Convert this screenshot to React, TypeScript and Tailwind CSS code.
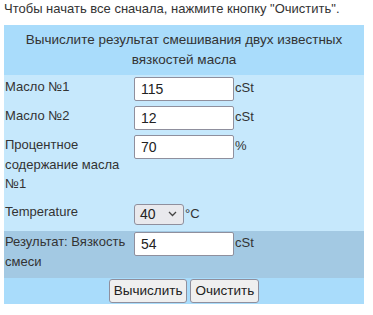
import React from "react";

const inputCls =
  "w-[100px] h-[24px] bg-white border border-[#8f8f9d] rounded-[2px] px-[6px] text-[14px] text-[#222] outline-none";

function Row({
  label,
  children,
  className,
  labelClass,
}: {
  label: React.ReactNode;
  children: React.ReactNode;
  className?: string;
  labelClass?: string;
}) {
  return (
    <div className={"flex items-start " + (className ?? "")}>
      <div className={"w-[130px] shrink-0 pl-[1px] leading-[19.5px] " + (labelClass ?? "")}>{label}</div>
      <div className="flex items-start">{children}</div>
    </div>
  );
}

export default function App() {
  return (
    <div
      className="w-[373px] h-[315px] bg-white text-[#333] text-[13px]"
      style={{ fontFamily: '"Liberation Sans", Arial, sans-serif' }}
    >
      <div className="pl-[4px] pt-[0px] h-[25px] text-[13px] leading-[17px]">
        Чтобы начать все сначала, нажмите кнопку "Очистить".
      </div>
      <div className="ml-[4px] w-[360px]">
        <div className="bg-[#a9dcfb] h-[50px] flex flex-col items-center justify-center text-[13.5px] leading-[20px] text-center">
          <div>Вычислите результат смешивания двух известных</div>
          <div>вязкостей масла</div>
        </div>
        <div className="bg-[#c6e8fc]">
          <Row label="Масло №1" className="h-[29px] pt-[2px]" labelClass="pt-[0px]">
            <input className={inputCls} defaultValue="115" readOnly />
            <span className="leading-[19.5px] pl-[1px] pt-[1px]">cSt</span>
          </Row>
          <Row label="Масло №2" className="h-[29px] pt-[2px]">
            <input className={inputCls} defaultValue="12" readOnly />
            <span className="leading-[19.5px] pl-[1px] pt-[1px]">cSt</span>
          </Row>
          <Row label={<>Процентное содержание масла №1</>} className="h-[64px] pt-[2px]">
            <input className={inputCls} defaultValue="70" readOnly />
            <span className="leading-[19.5px] pl-[1px] pt-[1px]">%</span>
          </Row>
          <div className="flex items-center h-[34px]">
            <div className="w-[130px] shrink-0 pl-[1px] pb-[4px]">Temperature</div>
            <div className="flex items-center">
              <div className="w-[50px] h-[21px] bg-[#e9e9ed] border border-[#8f8f9d] rounded-[3px] flex items-center justify-between pl-[5px] pr-[6px] text-[14px] text-[#222]">
                <span>40</span>
                <svg width="9" height="6" viewBox="0 0 9 6" fill="none" stroke="#444" strokeWidth="1.3">
                  <path d="M1 1l3.5 3.5L8 1" />
                </svg>
              </div>
              <span className="pl-[1px]">°C</span>
            </div>
          </div>
        </div>
        <Row
          label={<>Результат: Вязкость смеси</>}
          className="bg-[#a3c9e3] h-[47px] pt-[1px]"
          labelClass="pt-[0px]"
        >
          <input className={inputCls} defaultValue="54" readOnly />
          <span className="leading-[19.5px] pl-[1px] pt-[1px]">cSt</span>
        </Row>
        <div className="bg-[#a9dcfb] h-[26px] flex justify-center items-start pt-[1px] gap-[3px]">
          <button className="h-[24px] px-[4px] bg-[#efefef] border border-[#8f8f9d] rounded-[3px] text-[13.5px] text-[#222]">
            Вычислить
          </button>
          <button className="h-[24px] px-[4px] bg-[#efefef] border border-[#8f8f9d] rounded-[3px] text-[13.5px] text-[#222]">
            Очистить
          </button>
        </div>
      </div>
    </div>
  );
}
